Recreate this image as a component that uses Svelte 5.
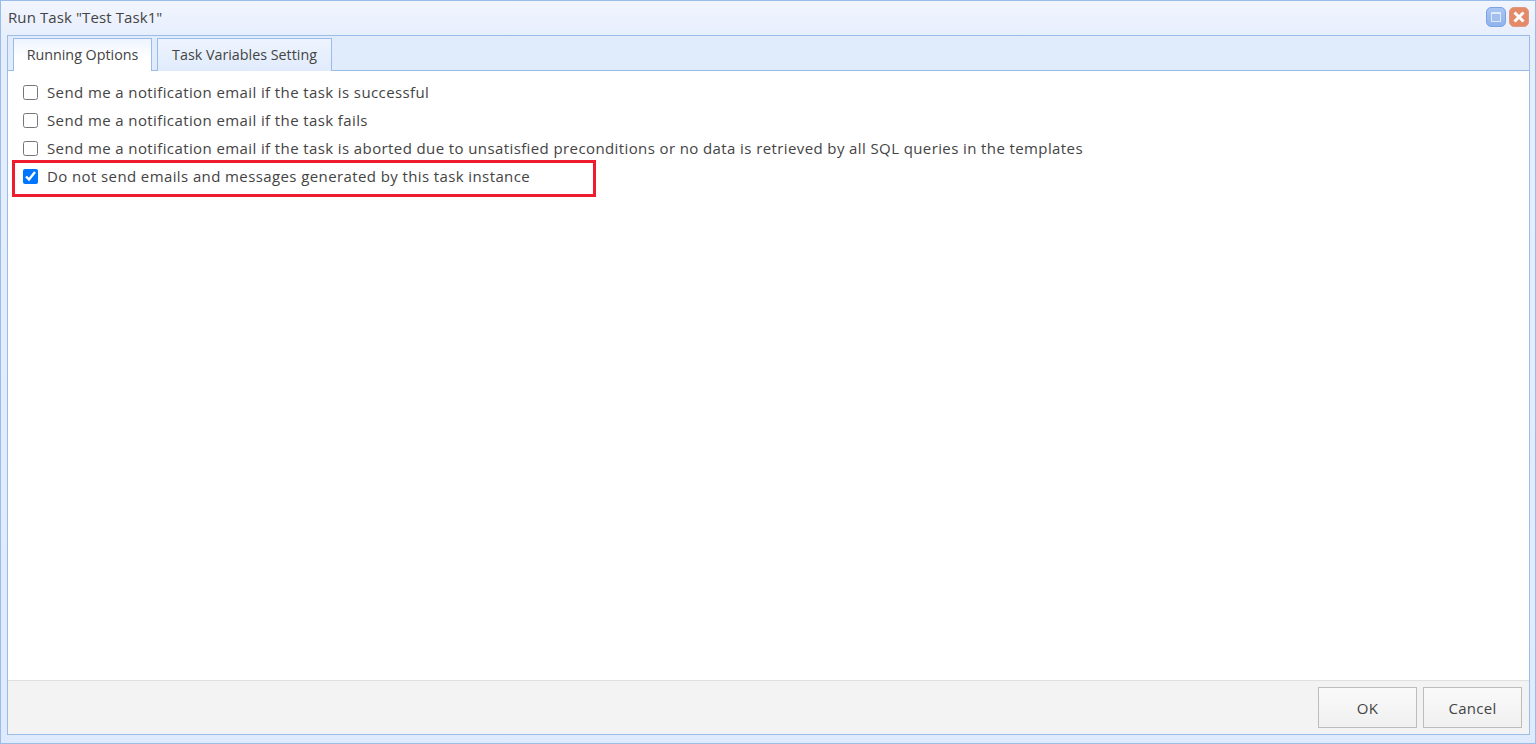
<script>
  const options = [
    { label: 'Send me a notification email if the task is successful', checked: false },
    { label: 'Send me a notification email if the task fails', checked: false },
    { label: 'Send me a notification email if the task is aborted due to unsatisfied preconditions or no data is retrieved by all SQL queries in the templates', checked: false },
    { label: 'Do not send emails and messages generated by this task instance', checked: true, marked: true }
  ];
</script>

<div class="window">
  <header class="title">
    <span class="title-text">Run Task "Test Task1"</span>
    <div class="tools">
      <span class="tool max"><span class="max-glyph"></span></span>
      <span class="tool close">
        <svg width="14" height="14" viewBox="0 0 14 14"><path d="M2.5 2.5l9 9M11.5 2.5l-9 9" stroke="#fff" stroke-width="3" fill="none"/></svg>
      </span>
    </div>
  </header>
  <div class="panel">
    <div class="tabs">
      <button class="tab active">Running Options</button>
      <button class="tab">Task Variables Setting</button>
    </div>
    <main class="body">
      {#each options as o}
        <label class="row" class:marked={o.marked}>
          <input type="checkbox" checked={o.checked} />
          <span>{o.label}</span>
        </label>
      {/each}
    </main>
    <footer class="footer">
      <button class="btn">OK</button>
      <button class="btn">Cancel</button>
    </footer>
  </div>
</div>

<style>
  :global(body) { margin: 0; background: #fff; }
  .window {
    box-sizing: border-box;
    width: 1536px;
    height: 744px;
    display: flex;
    flex-direction: column;
    padding: 0 5px 8px 6px;
    background: linear-gradient(#f1f5fe, #e6eefc 40px, #dfeafd);
    border: 1px solid #99bce8;
    font-family: "Open Sans", "Noto Sans", sans-serif;
    color: #444;
    font-size: 14px;
  }
  .title {
    height: 34px;
    flex: none;
    box-sizing: border-box;
    display: flex;
    align-items: center;
    justify-content: space-between;
    padding: 0 1px 2px 1px;
  }
  .title-text { color: #444; font-size: 15px; letter-spacing: 0.1px; }
  .tools { display: flex; gap: 3px; }
  .tool {
    box-sizing: border-box;
    width: 20px;
    height: 20px;
    border-radius: 5px;
    display: flex;
    align-items: center;
    justify-content: center;
  }
  .max { background: linear-gradient(#a8c6f2, #8fb3ec); border: 1px solid #7aa4e4; }
  .max-glyph { width: 10px; height: 10px; box-sizing: border-box; background: #a3bfee; border: 1px solid #dfe9fa; border-top-width: 2px; }
  .close { background: #e58a68; border: 1px solid #dd9a80; }
  .panel {
    flex: 1;
    min-height: 0;
    display: flex;
    flex-direction: column;
    border: 1px solid #99bce8;
    background: #fff;
  }
  .tabs {
    height: 35px;
    flex: none;
    box-sizing: border-box;
    display: flex;
    gap: 5px;
    padding: 2px 0 0 5px;
    background: #e0ebfc;
    border-bottom: 1px solid #99bce8;
  }
  .tab {
    box-sizing: border-box;
    height: 33px;
    padding: 0 0 2px 0;
    font: inherit;
    font-size: 14.3px;
    color: #444;
    border: 1px solid #99bce8;
    border-bottom: none;
    background: linear-gradient(#eef4fe, #e0ebfc);
    width: 175px;
  }
  .tab.active { width: 139px; background: linear-gradient(#eef4fe, #fff 60%); position: relative; z-index: 1; }
  .body {
    flex: 1;
    min-height: 0;
    display: flex;
    flex-direction: column;
    padding: 7px 0 0 4px;
    background: #fff;
  }
  .row {
    box-sizing: border-box;
    width: max-content;
    height: 28px;
    display: flex;
    align-items: center;
    gap: 9px;
    padding-left: 11px;
    position: relative;
    font-size: 15px;
    letter-spacing: 0.395px;
  }
  .row input { width: 15px; height: 15px; margin: 0; }
  .marked::after {
    content: "";
    position: absolute;
    left: 0;
    top: -2px;
    width: 584px;
    height: 37px;
    box-sizing: border-box;
    border: 3px solid #ee1c2e;
    pointer-events: none;
  }
  .footer {
    height: 54px;
    flex: none;
    box-sizing: border-box;
    display: flex;
    justify-content: flex-end;
    align-items: center;
    gap: 6px;
    padding-right: 7px;
    background: #f3f3f3;
    border-top: 1px solid #e0e0e0;
  }
  .btn {
    box-sizing: border-box;
    width: 99px;
    height: 41px;
    font: inherit;
    font-size: 15px;
    letter-spacing: 0.3px;
    color: #444;
    border: 1px solid #bdbdbd;
    background: linear-gradient(#fafafa, #f0f0f0);
  }
</style>
